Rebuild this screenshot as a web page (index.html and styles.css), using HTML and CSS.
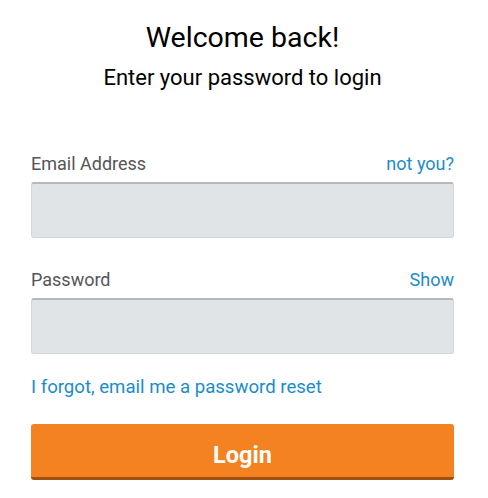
FILE: index.html
```html
<!DOCTYPE html>
<html lang="en">
<head>
  <meta charset="UTF-8" />
  <title>Login</title>
  <meta name="viewport" content="width=device-width, initial-scale=1.0" />
  <link rel="stylesheet" href="styles.css">
</head>
<body>
  <div class="container">
    <h1>Welcome back!</h1>
    <p class="subtitle">Enter your password to login</p>

    <div class="field">
      <div class="field-head">
        <label for="email">Email Address</label>
        <a href="#">not you?</a>
      </div>
      <input id="email" type="email" />
    </div>

    <div class="field">
      <div class="field-head">
        <label for="password">Password</label>
        <a href="#">Show</a>
      </div>
      <input id="password" type="password" />
    </div>

    <a class="forgot" href="#">I forgot, email me a password reset</a>

    <button>Login</button>
  </div>
</body>
</html>
```

FILE: styles.css
```css
body {
  margin: 0;
  background: #fff;
  color: #000;
  font-family: Roboto, 'Liberation Sans', sans-serif;
}
.container {
  width: 423px;
  margin-left: 31px;
  padding-top: 22px;
}
h1 {
  margin: 0;
  font-size: 28.5px;
  line-height: 32px;
  font-weight: 400;
  text-align: center;
}
.subtitle {
  margin: 12px 0 0;
  font-size: 22px;
  line-height: 24px;
  text-align: center;
}
.field {
  margin-top: 31px;
}
.field:first-of-type {
  margin-top: 63px;
}
.field-head {
  display: flex;
  justify-content: space-between;
  align-items: center;
  font-size: 18px;
  line-height: 22px;
  margin-bottom: 7px;
}
.field-head label {
  color: #555;
}
a {
  color: #1a8ccc;
  text-decoration: none;
}
input {
  display: block;
  box-sizing: border-box;
  width: 100%;
  height: 56px;
  margin: 0;
  border: 1px solid #d3d7db;
  border-top: 2px solid #b4b9be;
  border-radius: 3px;
  background: #e1e4e7;
}
.forgot {
  display: block;
  margin-top: 22px;
  font-size: 18.6px;
  line-height: 22px;
}
button {
  display: block;
  width: 100%;
  height: 56px;
  margin-top: 26px;
  padding: 9px 0 0;
  border: none;
  border-bottom: 3px solid #a0500f;
  border-radius: 3px;
  background: #f58220;
  color: #fff;
  font-family: Roboto, 'Liberation Sans', sans-serif;
  font-size: 23.5px;
  font-weight: bold;
  cursor: pointer;
}
```
